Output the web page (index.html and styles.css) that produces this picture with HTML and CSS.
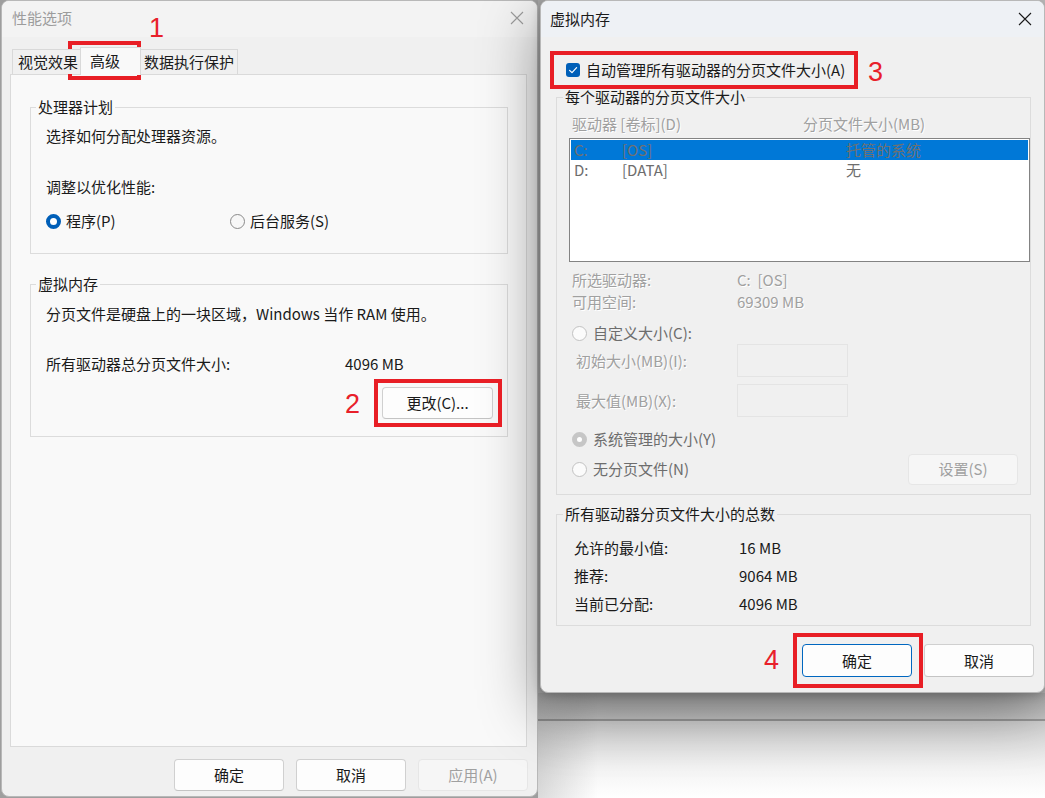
FILE: index.html
```html
<!DOCTYPE html>
<html lang="zh-CN">
<head>
<meta charset="utf-8">
<title>性能选项 / 虚拟内存</title>
<link rel="stylesheet" href="styles.css">
</head>
<body>
<div class="desktop">
  <div class="backdrop"></div>

  <section class="win win-perf">
    <div class="titlebar">
      <span class="title">性能选项</span>
      <svg class="close" width="14" height="14" viewBox="0 0 14 14"><path d="M1 1L13 13M13 1L1 13" stroke="currentColor" stroke-width="1.1" fill="none"/></svg>
    </div>
    <div class="tabs">
      <div class="tab tab-1">视觉效果</div>
      <div class="tab tab-2 active">高级</div>
      <div class="tab tab-3">数据执行保护</div>
    </div>
    <div class="panel">
      <fieldset class="group group-cpu">
        <legend>处理器计划</legend>
        <p class="line">选择如何分配处理器资源。</p>
        <p class="line gap-31">调整以优化性能:</p>
        <div class="radio-row">
          <label class="opt"><span class="radio on"></span>程序(P)</label>
          <label class="opt"><span class="radio"></span>后台服务(S)</label>
        </div>
      </fieldset>
      <fieldset class="group group-vm">
        <legend>虚拟内存</legend>
        <p class="line">分页文件是硬盘上的一块区域，Windows 当作 RAM 使用。</p>
        <div class="line total-row"><span>所有驱动器总分页文件大小:</span><span>4096 MB</span></div>
        <div class="change-row"><button type="button" class="btn btn-change">更改(C)...</button></div>
      </fieldset>
    </div>
    <div class="actions actions-perf">
      <button type="button" class="btn">确定</button>
      <button type="button" class="btn">取消</button>
      <button type="button" class="btn btn-disabled">应用(A)</button>
    </div>
  </section>

  <section class="win win-vm">
    <div class="titlebar">
      <span class="title">虚拟内存</span>
      <svg class="close" width="14" height="14" viewBox="0 0 14 14"><path d="M1 1L13 13M13 1L1 13" stroke="currentColor" stroke-width="1.1" fill="none"/></svg>
    </div>
    <div class="vm-body">
      <label class="auto-row">
        <span class="check"><svg width="14" height="14" viewBox="0 0 14 14"><path d="M3.6 7.3L6 9.7L10.6 4.6" stroke="#fff" stroke-width="1.2" fill="none" stroke-linecap="round" stroke-linejoin="round"/></svg></span>
        自动管理所有驱动器的分页文件大小(A)
      </label>

      <fieldset class="group group-drives">
        <legend>每个驱动器的分页文件大小</legend>
        <div class="col-head dim">
          <span>驱动器 [卷标](D)</span>
          <span>分页文件大小(MB)</span>
        </div>
        <div class="listbox">
          <div class="lrow selected"><span>C:</span><span>[OS]</span><span>托管的系统</span></div>
          <div class="lrow"><span>D:</span><span>[DATA]</span><span>无</span></div>
        </div>
        <div class="info dim">
          <span>所选驱动器:</span><span>C:&nbsp; [OS]</span>
          <span>可用空间:</span><span>69309 MB</span>
        </div>
        <label class="opt opt-dis gap-custom"><span class="radio dis"></span>自定义大小(C):</label>
        <div class="size-row">
          <span class="size-label dim">初始大小(MB)(I):</span>
          <span class="field"></span>
        </div>
        <div class="size-row size-row-2">
          <span class="size-label dim">最大值(MB)(X):</span>
          <span class="field"></span>
        </div>
        <label class="opt opt-dis gap-sys"><span class="radio dis-on"></span>系统管理的大小(Y)</label>
        <div class="nopage-row">
          <label class="opt opt-dis"><span class="radio dis"></span>无分页文件(N)</label>
          <button type="button" class="btn btn-disabled btn-set">设置(S)</button>
        </div>
      </fieldset>

      <fieldset class="group group-total">
        <legend>所有驱动器分页文件大小的总数</legend>
        <div class="totals">
          <span>允许的最小值:</span><span>16 MB</span>
          <span>推荐:</span><span>9064 MB</span>
          <span>当前已分配:</span><span>4096 MB</span>
        </div>
      </fieldset>
    </div>
    <div class="actions actions-vm">
      <button type="button" class="btn btn-default">确定</button>
      <button type="button" class="btn">取消</button>
    </div>
  </section>

  <div class="mark mark-1"></div>
  <span class="num num-1">1</span>
  <div class="mark mark-2"></div>
  <span class="num num-2">2</span>
  <div class="mark mark-3"></div>
  <span class="num num-3">3</span>
  <div class="mark mark-4"></div>
  <span class="num num-4">4</span>
</div>
</body>
</html>
```

FILE: styles.css
```css
* { box-sizing: border-box; }
html, body { margin: 0; padding: 0; }
body {
  width: 1045px;
  height: 798px;
  overflow: hidden;
  background: #9e9e9e;
  font-family: "Noto Sans CJK SC", "Microsoft YaHei", sans-serif;
  font-size: 15px;
  color: #1a1a1a;
}
.desktop { position: relative; width: 1045px; height: 798px; overflow: hidden; }

.backdrop {
  position: absolute;
  left: 538px; top: 0; right: 0; bottom: 0;
  background:
    linear-gradient(to right, rgba(0,0,0,0.14) 0, rgba(0,0,0,0) 60px),
    linear-gradient(#c4c4c4 0, #c4c4c4 693px, #b6b6b6 693px, #cbcbcb 719px, #9c9c9c 719px, #9c9c9c 721px, #d6d6d6 721px, #f4f4f4 770px, #ffffff 798px);
}

/* windows */
.win {
  position: absolute;
  top: 0;
  display: flex;
  flex-direction: column;
  background: #f0f0f0;
  border: 1px solid #b8b8b8;
  border-radius: 8px;
  overflow: hidden;
}
.win-perf { left: 1px; width: 537px; height: 797px; }
.win-vm {
  left: 540px; width: 505px; height: 693px;
  box-shadow: 0 18px 60px rgba(0, 0, 0, 0.42), 0 2px 10px rgba(0, 0, 0, 0.18);
}

.titlebar {
  flex: none;
  height: 36px;
  display: flex;
  align-items: center;
  justify-content: space-between;
}
.win-perf .titlebar { background: #f3f3f3; padding: 0 13px 3px 10px; color: #9c9c9c; }
.win-vm .titlebar { background: #eef1f5; padding: 0 12px 0 9px; color: #1a1a1a; }
.title { line-height: 20px; }
.close { display: block; }

/* tabs */
.tabs {
  flex: none;
  height: 37px;
  display: flex;
  align-items: flex-end;
  padding-left: 10px;
  position: relative;
  z-index: 1;
}
.tab {
  height: 25px;
  line-height: 23px;
  border: 1px solid #d9d9d9;
  border-bottom: none;
  background: #f0f0f0;
  white-space: nowrap;
}
.tab-1 { width: 69px; padding-left: 5px; }
.tab-2 { width: 61px; margin-left: -1px; padding-left: 9px; }
.tab-3 { width: 98px; margin-left: -1px; padding-left: 3px; }
.tab.active {
  height: 28px;
  line-height: 26px;
  margin-bottom: -1px;
  background: #f9f9f9;
  position: relative;
  z-index: 2;
}

.panel {
  flex: none;
  height: 673px;
  margin: 0 10px 0 8px;
  background: #f9f9f9;
  border: 1px solid #dadada;
  padding: 22px 18px 0 19px;
}

/* group boxes */
.group {
  margin: 0;
  min-width: 0;
  border: 1px solid #dcdcdc;
}
.group legend { padding: 0 2px; line-height: 20px; color: #1a1a1a; }
.group-cpu { padding: 9px 14px 22px 15px; }
.group-vm { margin-top: 20px; padding: 10px 14px 17px 15px; }
.group-cpu legend, .group-vm legend { margin-left: -10px; }

.line { margin: 0; line-height: 20px; }
.gap-31 { margin-top: 31px; }

.radio-row {
  margin-top: 14px;
  display: grid;
  grid-template-columns: 184px auto;
}
.opt { display: flex; align-items: center; gap: 5px; line-height: 20px; }
.radio {
  flex: none;
  width: 15px; height: 15px;
  border-radius: 50%;
  border: 1px solid #8a8a8a;
  background: #f7f7f7;
}
.radio.on { border: 4px solid #005fb8; background: #ffffff; }
.radio.dis { border-color: #c2c2c2; background: #fbfbfb; }
.radio.dis-on { border: 5px solid #c6c6c6; background: #ffffff; }

.total-row {
  margin-top: 30px;
  display: grid;
  grid-template-columns: 299px auto;
}
.change-row { margin-top: 13px; display: flex; justify-content: flex-end; }

/* buttons */
.btn {
  width: 110px;
  height: 32px;
  margin: 0;
  padding: 0;
  border: 1px solid #d0d0d0;
  border-bottom-color: #c4c4c4;
  border-radius: 4px;
  background: #fdfdfd;
  font: inherit;
  color: #1a1a1a;
  line-height: 20px;
}
.btn-change { width: 111px; }
.btn-disabled { background: #f6f6f6; border-color: #e6e6e6; color: #a0a0a0; }
.btn-default { border-color: #0067c0; }

.actions { flex: none; display: flex; justify-content: flex-end; gap: 12px; }
.actions-perf { margin-top: 12px; padding-right: 9px; }
.actions-vm { margin-top: 18px; padding-right: 10px; }
.actions-vm .btn { height: 33px; }

/* virtual memory dialog */
.vm-body { flex: none; padding: 0 13px 0 15px; }
.auto-row {
  margin-top: 23px;
  padding-left: 10px;
  display: flex;
  align-items: center;
  gap: 6px;
  line-height: 20px;
}
.check {
  flex: none;
  width: 14px; height: 14px;
  border-radius: 3px;
  background: #005fb8;
  display: flex;
}
.check svg { display: block; }

.group-drives { margin-top: 7px; padding: 7px 12px 9px 15px; }
.group-drives legend { margin-left: -9px; }
.group-total { margin-top: 9px; padding: 14px 0 11px 17px; }
.group-total legend { margin-left: -11px; }

.dim { color: #a0a0a0; text-shadow: 1px 1px 0 #ffffff; }

.col-head {
  display: grid;
  grid-template-columns: 231px auto;
  line-height: 20px;
}
.listbox {
  margin: 4px -12px 0 -3px;
  height: 124px;
  border: 1px solid #838383;
  background: #ffffff;
  padding: 1px;
}
.lrow {
  display: grid;
  grid-template-columns: 48px 224px auto;
  height: 20px;
  line-height: 20px;
  padding-left: 3px;
  color: #6d6d6d;
}
.lrow.selected { background: #0078d7; color: #707070; }

.info {
  margin-top: 7px;
  display: grid;
  grid-template-columns: 165px auto;
  line-height: 22px;
}
.opt-dis { gap: 6px; color: #6d6d6d; }
.gap-custom { margin-top: 10px; }
.size-row {
  margin-top: 1px;
  height: 33px;
  display: flex;
  align-items: center;
  padding-left: 4px;
}
.size-row-2 { margin-top: 7px; }
.size-label { width: 161px; line-height: 20px; }
.field {
  width: 111px;
  height: 33px;
  border: 1px solid #e4e4e4;
  background: #f0f0f0;
}
.gap-sys { margin-top: 12px; }
.nopage-row {
  margin-top: 4px;
  height: 32px;
  display: flex;
  align-items: center;
  justify-content: space-between;
}
.btn-set { height: 31px; }

.totals {
  display: grid;
  grid-template-columns: 165px auto;
  row-gap: 8px;
  line-height: 20px;
}

/* annotations */
.mark {
  position: absolute;
  border: 4px solid #e81e25;
  pointer-events: none;
}
.mark-1 { left: 68px; top: 41px; width: 73px; height: 39px; }
.mark-2 { left: 374px; top: 379px; width: 128px; height: 48px; }
.mark-3 { left: 550px; top: 51px; width: 308px; height: 38px; }
.mark-4 { left: 793px; top: 633px; width: 130px; height: 55px; }

.num {
  position: absolute;
  font-family: "Liberation Sans", Arial, sans-serif;
  font-size: 27px;
  line-height: 27px;
  color: #e8202a;
}
.num-1 { left: 149px; top: 15px; }
.num-2 { left: 345px; top: 391px; }
.num-3 { left: 868px; top: 59px; }
.num-4 { left: 764px; top: 647px; }
```
